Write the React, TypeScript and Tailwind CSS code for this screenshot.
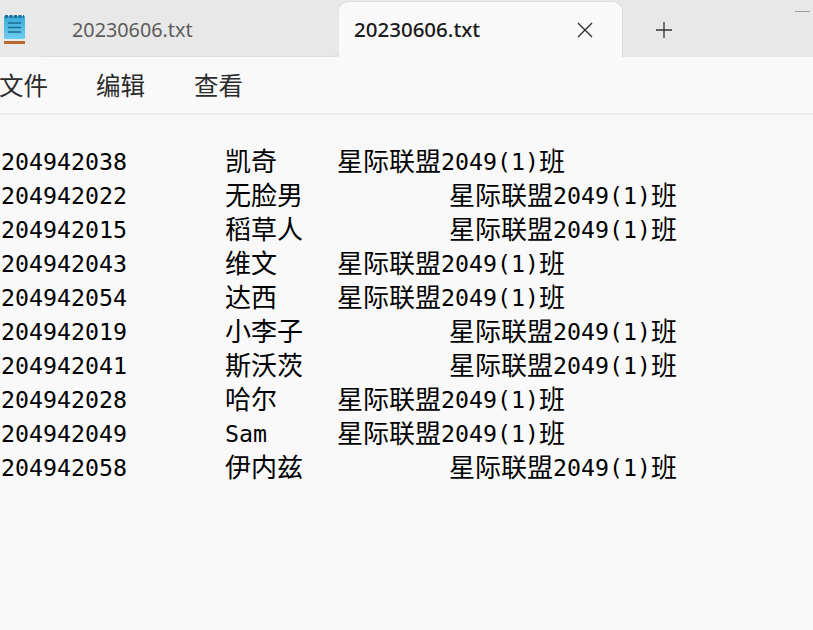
import React from 'react';

const rows: [string, string, number][] = [
  ['204942038', '凯奇', 1],
  ['204942022', '无脸男', 2],
  ['204942015', '稻草人', 2],
  ['204942043', '维文', 1],
  ['204942054', '达西', 1],
  ['204942019', '小李子', 2],
  ['204942041', '斯沃茨', 2],
  ['204942028', '哈尔', 1],
  ['204942049', 'Sam', 1],
  ['204942058', '伊内兹', 2],
];

const cjk = "text-[26px] align-[-1px] font-['Noto_Sans_CJK_SC',sans-serif]";

function Cjk({ children }: { children: React.ReactNode }) {
  return <span className={cjk}>{children}</span>;
}

export default function App() {
  return (
    <div className="w-[813px] h-[630px] overflow-hidden bg-[#f9f9f9] font-['Noto_Sans','Noto_Sans_CJK_SC',sans-serif]">
      {/* tab strip */}
      <div className="relative flex h-[57px] bg-[#e8e8e8]">
        <svg className="absolute left-[4px] top-[14px]" width="22" height="30" viewBox="0 0 22 30">
          <defs>
            <linearGradient id="pad" x1="0" y1="0" x2="0" y2="1">
              <stop offset="0" stopColor="#3aa9d8" />
              <stop offset="1" stopColor="#6fcdf0" />
            </linearGradient>
          </defs>
          <rect x="0" y="2" width="21" height="23" rx="1" fill="url(#pad)" />
          <path d="M1 2.5h19" stroke="#1d6f96" strokeWidth="3" strokeDasharray="3 1.5" />
          <path d="M4 9h13M4 13.5h13M4 18h13" stroke="#1b6d92" strokeWidth="1.6" />
          <rect x="0" y="27" width="21" height="3" fill="#b5682f" />
        </svg>
        <div className="ml-[40px] mt-[3px] mb-[1px] flex w-[299px] items-center rounded-br-[6px] pl-[32px] text-[19.8px] text-[#5c5c5c] shadow-[1px_1px_0_#dedede]">
          20230606.txt
        </div>
        <div className="mt-[2px] flex w-[283px] items-center justify-between rounded-t-[9px] bg-[#f9f9f9] pl-[15px] pr-[28px] text-[20.5px] font-medium text-[#1a1a1a] shadow-[0_-1px_0_#dcdcdc,1px_0_0_#dcdcdc]">
          20230606.txt
          <svg width="18" height="18" viewBox="0 0 18 18" fill="none" stroke="#2a2a2a" strokeWidth="1.3">
            <path d="M2 2l14 14M16 2L2 16" />
          </svg>
        </div>
        <svg className="ml-[33px] mt-[21px]" width="18" height="18" viewBox="0 0 18 18" fill="none" stroke="#333" strokeWidth="1.3">
          <path d="M9 1v16M1 9h16" />
        </svg>
        <div className="absolute left-[795px] top-[11px] h-px w-[15px] bg-[#9a9a9a]" />
      </div>
      {/* menu */}
      <div className="flex h-[58px] items-center border-b-2 border-[#ececec] pt-[3px] text-[24.5px] leading-none text-[#2b2b2b]">
        <span className="-ml-px w-[49px]">文件</span>
        <span className="ml-[48px] w-[49px]">编辑</span>
        <span className="ml-[49px] w-[49px]">查看</span>
      </div>
      {/* text area */}
      <div className="whitespace-pre pl-px pt-[28px] font-['DejaVu_Sans_Mono',monospace] text-[23.25px] leading-[34px] text-black [tab-size:8]">
        {rows.map(([id, name, tabs]) => (
          <div key={id} className="h-[34px]">
            {id}
            {'\t'}
            {name === 'Sam' ? name : <Cjk>{name}</Cjk>}
            {tabs === 2 ? '\t\t' : '\t'}
            <Cjk>星际联盟</Cjk>2049(1)<Cjk>班</Cjk>
          </div>
        ))}
      </div>
    </div>
  );
}
